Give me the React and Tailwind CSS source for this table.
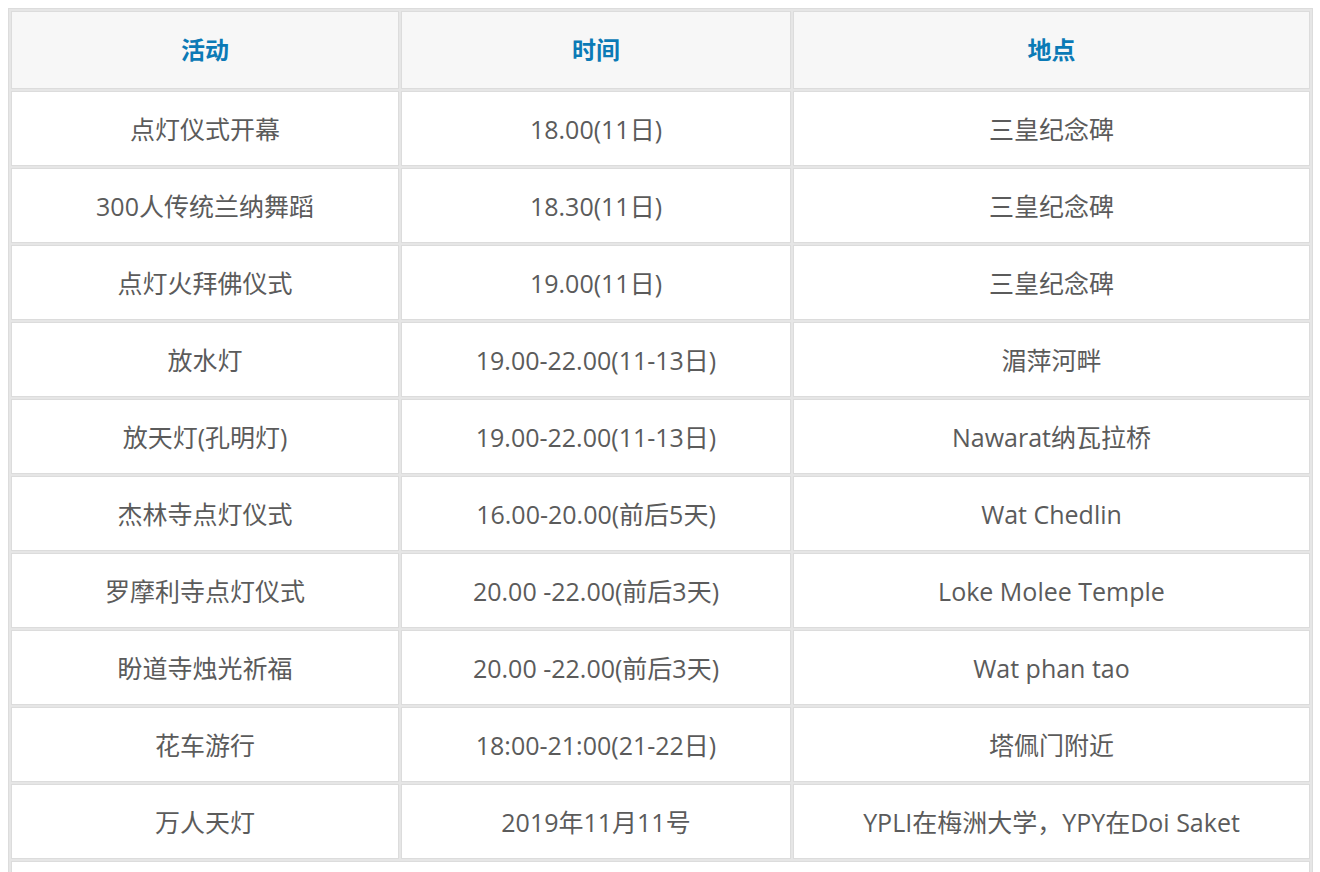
import React from "react";

const rows = [
  ["点灯仪式开幕", "18.00(11日)", "三皇纪念碑"],
  ["300人传统兰纳舞蹈", "18.30(11日)", "三皇纪念碑"],
  ["点灯火拜佛仪式", "19.00(11日)", "三皇纪念碑"],
  ["放水灯", "19.00-22.00(11-13日)", "湄萍河畔"],
  ["放天灯(孔明灯)", "19.00-22.00(11-13日)", "Nawarat纳瓦拉桥"],
  ["杰林寺点灯仪式", "16.00-20.00(前后5天)", "Wat Chedlin"],
  ["罗摩利寺点灯仪式", "20.00 -22.00(前后3天)", "Loke Molee Temple"],
  ["盼道寺烛光祈福", "20.00 -22.00(前后3天)", "Wat phan tao"],
  ["花车游行", "18:00-21:00(21-22日)", "塔佩门附近"],
  ["万人天灯", "2019年11月11号", "YPLI在梅洲大学，YPY在Doi Saket"],
];

export default function App() {
  return (
    <div
      className="w-[1320px] h-[872px] overflow-hidden bg-white pt-[8px] pl-[8px]"
      style={{ fontFamily: '"Open Sans", "Noto Sans CJK SC", sans-serif' }}
    >
      <table className="w-[1305px] table-fixed border-separate border-spacing-[2px] border border-[#dcdcdc] bg-[#e6e6e6] text-[25px] text-[#5b5b5b]">
        <colgroup>
          <col className="w-[388px]" />
          <col className="w-[390px]" />
          <col className="w-[517px]" />
        </colgroup>
        <thead>
          <tr>
            {["活动", "时间", "地点"].map((h) => (
              <th
                key={h}
                className="h-[78px] p-0 border border-[#dcdcdc] bg-[#f7f7f7] text-center align-middle font-bold text-[24px] text-[#0b7ab6]"
              >
                {h}
              </th>
            ))}
          </tr>
        </thead>
        <tbody>
          {rows.map((r, i) => (
            <tr key={i}>
              {r.map((c, j) => (
                <td
                  key={j}
                  className="h-[75px] p-0 pt-[2px] border border-[#dcdcdc] bg-white text-center align-middle leading-none"
                >
                  {c}
                </td>
              ))}
            </tr>
          ))}
          <tr>
            <td
              colSpan={3}
              className="h-[75px] p-0 border border-[#dcdcdc] bg-white text-center align-middle"
            >
              &nbsp;
            </td>
          </tr>
        </tbody>
      </table>
    </div>
  );
}
